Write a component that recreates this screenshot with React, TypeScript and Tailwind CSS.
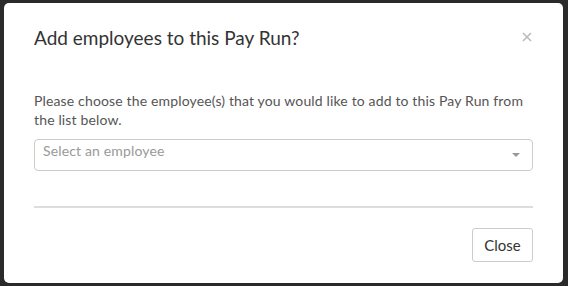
import React from 'react';

export default function App() {
  return (
    <div className="h-[286px] w-[568px] bg-[#2a2a2a] pl-[4px] pt-[3px] font-['Lato',sans-serif]">
      <div className="flex h-[280px] w-[559px] flex-col rounded-[5px] bg-white px-[30px]">
        <div className="flex h-[70px] items-center justify-between">
          <h2 className="mt-[-2px] text-[19px] leading-none text-[#333]">Add employees to this Pay Run?</h2>
          <button className="mr-[1px] mt-[-2px] text-[#bbb]">
            <svg width="10" height="10" viewBox="0 0 10 10" stroke="currentColor" strokeWidth="1.6">
              <path d="M1 1 L9 9 M9 1 L1 9" />
            </svg>
          </button>
        </div>
        <p className="mt-[18px] text-[14px] leading-[19px] tracking-[0.15px] text-[#555]">
          Please choose the employee(s) that you would like to add to this Pay Run from the list below.
        </p>
        <div className="mt-[10px] flex h-[32px] items-center justify-between rounded-[4px] border border-[#ccc] pl-[8px] pr-[12px]">
          <span className="mt-[-9px] text-[14px] tracking-[0.15px] text-[#999]">Select an employee</span>
          <span className="h-0 w-0 border-x-[4px] border-t-[4px] border-x-transparent border-t-[#999]" />
        </div>
        <div className="mt-[35px] h-[2px] bg-[#ddd]" />
        <div className="mt-[20px] flex justify-end">
          <button className="h-[34px] w-[61px] rounded-[3px] border border-[#ccc] text-[15px] text-[#333]">
            Close
          </button>
        </div>
      </div>
    </div>
  );
}
